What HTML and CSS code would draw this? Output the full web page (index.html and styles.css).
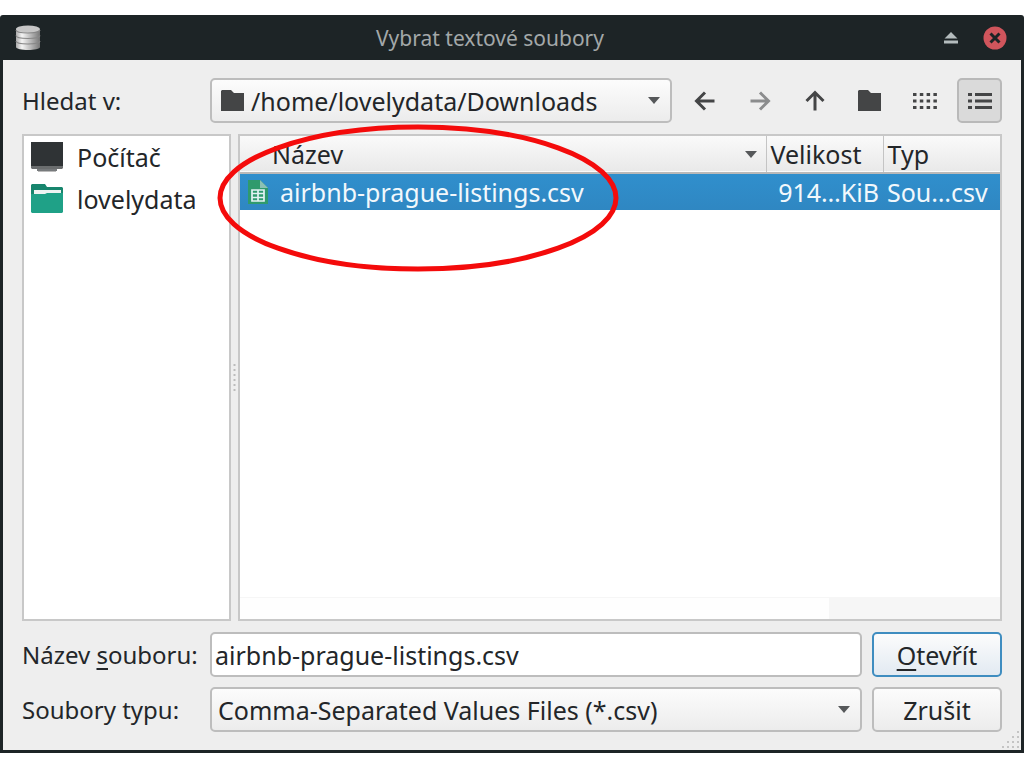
FILE: index.html
```
<!DOCTYPE html>
<html lang="cs">

<head>
    <meta charset="UTF-8">
    <meta name="viewport" content="width=device-width, initial-scale=1.0">
    <title>Vybrat textové soubory</title>
    <link rel="stylesheet" href="styles.css">
</head>

<body>
    <div class="window">
        <header class="titlebar">
            <svg class="app-icon" width="26" height="26" viewBox="0 0 26 26" aria-hidden="true">
                <defs>
                    <linearGradient id="metal">
                        <stop offset="0" stop-color="#aaa" />
                        <stop offset="0.25" stop-color="#f4f4f4" />
                        <stop offset="0.6" stop-color="#bbb" />
                        <stop offset="1" stop-color="#777" />
                    </linearGradient>
                </defs>
                <path d="M1 4v18c0 4 24 4 24 0V4z" fill="url(#metal)" />
                <ellipse cx="13" cy="4" rx="12" ry="3.500" fill="#c6c6c6" />
                <path d="M1 5c0 4 24 4 24 0M1 10.500c0 4 24 4 24 0M1 16c0 4 24 4 24 0" fill="none" stroke="#888" stroke-width="1.200" />
            </svg>
            <h1>Vybrat textové soubory</h1>
            <div class="window-buttons">
                <button type="button" aria-label="Maximalizovat">
                    <svg width="24" height="24" viewBox="0 0 24 24"><path d="M12 6l6.500 6.500h-13zM5 14.500h14v3H5z" fill="#b4bcbd" /></svg>
                </button>
                <button type="button" aria-label="Zavřít">
                    <svg width="24" height="24" viewBox="0 0 24 24"><circle cx="12" cy="12" r="11.500" fill="#d0555c" /><path d="M7.500 7.500l9 9M16.500 7.500l-9 9" stroke="#1d2426" stroke-width="3" /></svg>
                </button>
            </div>
        </header>

        <form class="content">
            <div class="toolbar">
                <label class="label" for="path">Hledat v:</label>
                <div class="combo">
                    <svg width="24" height="22" viewBox="0 0 24 22"><path d="M1 0h9l3 3h10v18H0V1z" fill="#444546" /></svg>
                    <select id="path">
                        <option>/home/lovelydata/Downloads</option>
                    </select>
                    <svg class="arrow" width="12" height="7" viewBox="0 0 12 7"><path d="M0 0h12L6 7z" fill="#56585a" /></svg>
                </div>
                <button type="button" class="tool" aria-label="Zpět">
                    <svg width="24" height="24" viewBox="0 0 24 24"><path d="M21.500 12H4M12 3.500L3.500 12l8.500 8.500" /></svg>
                </button>
                <button type="button" class="tool" aria-label="Vpřed" disabled>
                    <svg width="24" height="24" viewBox="0 0 24 24"><path d="M2.500 12H20M12 3.500l8.500 8.500-8.500 8.500" /></svg>
                </button>
                <button type="button" class="tool" aria-label="Nadřazená složka">
                    <svg width="24" height="24" viewBox="0 0 24 24"><path d="M12 21.500V4M3.500 12L12 3.500l8.500 8.500" /></svg>
                </button>
                <button type="button" class="tool" aria-label="Nová složka">
                    <svg width="24" height="24" viewBox="0 0 24 24"><path class="solid" d="M1 1h9l3 3h10v18H0V2z" /></svg>
                </button>
                <button type="button" class="tool" aria-label="Zobrazit ikony">
                    <svg width="24" height="24" viewBox="0 0 24 24"><path d="M0 5.500h24M0 12h24M0 18.500h24" stroke-dasharray="3.500 3.300" /></svg>
                </button>
                <button type="button" class="tool active" aria-label="Zobrazit podrobnosti">
                    <svg width="24" height="24" viewBox="0 0 24 24"><path d="M0 5.500h4M0 12h4M0 18.500h4M7 5.500h17M7 12h17M7 18.500h17" /></svg>
                </button>
            </div>

            <div class="panels">
                <ul class="places">
                    <li>
                        <svg width="34" height="32" viewBox="0 0 34 32"><path d="M1 1h32v26H1z" fill="#2f3335" /><path d="M1 25h32v2l-1 1H2l-1-1z" fill="#6a6d6e" /><path d="M7 28h20v2H7z" fill="#777a7c" /><path d="M8 30h18v1H8z" fill="#bbb" /></svg>
                        Počítač
                    </li>
                    <li>
                        <svg width="34" height="32" viewBox="0 0 34 32"><path d="M1 2l1-1h13l2 3h15l1 1v8H1z" fill="#17856d" /><path d="M4 7h27v4H4z" fill="#eef3f2" /><path d="M1 11l14 0 2-1h16v19l-1 1H2l-1-1z" fill="#1fa187" /></svg>
                        lovelydata
                    </li>
                </ul>
                <div class="splitter">
                    <svg width="5" height="30" viewBox="0 0 5 30"><path d="M2.500 1v28" stroke="#bbb" stroke-width="2" stroke-dasharray="2 3" /></svg>
                </div>
                <div class="files">
                    <table>
                        <thead>
                            <tr>
                                <th class="col-name">
                                    <div class="cell">
                                        Název
                                        <svg width="12" height="7" viewBox="0 0 12 7"><path d="M0 0h12L6 7z" fill="#56585a" /></svg>
                                    </div>
                                </th>
                                <th class="col-size">Velikost</th>
                                <th class="col-type">Typ</th>
                            </tr>
                        </thead>
                        <tbody>
                            <tr>
                                <td>
                                    <div class="cell">
                                        <svg width="20" height="26" viewBox="0 0 20 26"><path d="M0 1h12l8 8v16H0z" fill="#2f9a6d" /><path d="M12 1l8 8h-8z" fill="#8cc0b4" /><path d="M4 11h12v11H4zM4 14.500h12M4 18.500h12M10 11v11" fill="none" stroke="#e4f2f4" stroke-width="1.700" /></svg>
                                        airbnb-prague-listings.csv
                                    </div>
                                </td>
                                <td class="size">914…KiB</td>
                                <td>Sou…csv</td>
                            </tr>
                        </tbody>
                    </table>
                    <div class="scrollbar"><div class="thumb"></div></div>
                </div>
            </div>

            <div class="fields">
                <label class="label" for="filename">Název <u>s</u>ouboru:</label>
                <input type="text" id="filename" value="airbnb-prague-listings.csv">
                <button type="submit" class="btn primary"><u>O</u>tevřít</button>

                <label class="label" for="filetype">Soubory typu:</label>
                <div class="combo">
                    <select id="filetype">
                        <option>Comma-Separated Values Files (*.csv)</option>
                    </select>
                    <svg class="arrow" width="12" height="7" viewBox="0 0 12 7"><path d="M0 0h12L6 7z" fill="#56585a" /></svg>
                </div>
                <button type="button" class="btn">Zrušit</button>
            </div>
        </form>

        <svg class="grip" width="17" height="17" viewBox="0 0 17 17"><path d="M15 0h2v2h-2zM10 5h2v2h-2zM15 5h2v2h-2zM5 10h2v2H5zM10 10h2v2h-2zM15 10h2v2h-2zM0 15h2v2H0zM5 15h2v2H5zM10 15h2v2h-2zM15 15h2v2h-2z" fill="#c4c4c4" /></svg>

        <!-- red ring around the selected file -->
        <svg class="ring" width="404" height="150" viewBox="0 0 404 150"><ellipse cx="202" cy="75" rx="198" ry="71" fill="none" stroke="#f40b0b" stroke-width="5" /></svg>
    </div>
</body>

</html>
```
FILE: styles.css
```
* {
    box-sizing: border-box;
}

body {
    margin: 0;
    padding: 15px 0;
    min-height: 100vh;
    display: flex;
    background-color: white;
    color: #232629;
    font-family: "Noto Sans", sans-serif;
    font-size: 25px;
}

button,
input,
select {
    font: inherit;
    color: inherit;
}

svg {
    flex-shrink: 0;
}

u {
    text-decoration-thickness: 2px;
    text-underline-offset: 4px;
    text-decoration-skip-ink: none;
}

.window {
    position: relative;
    flex: 1;
    display: flex;
    flex-direction: column;
    border: 3px solid #1d2426;
    border-top: 0;
    border-radius: 3px 3px 0 0;
    background-color: #eeeeee;
}

.titlebar {
    height: 45px;
    padding: 0 14px 0 12px;
    display: flex;
    align-items: center;
    background-color: #1d2426;
    color: #a3a8a9;
}

.titlebar h1 {
    flex: 1;
    margin: 0;
    font-size: 21px;
    font-weight: normal;
    text-align: center;
}

.window-buttons {
    display: flex;
    gap: 20px;
}

.window-buttons button {
    display: flex;
    padding: 0;
    border: 0;
    background: none;
}

.content {
    flex: 1;
    display: flex;
    flex-direction: column;
    gap: 11px;
    padding: 18px 19px;
}

.toolbar {
    display: flex;
    align-items: center;
    gap: 10px;
}

.label {
    width: 178px;
    font-size: 24px;
    white-space: nowrap;
}

.combo,
.btn,
#filename {
    height: 45px;
    border: 2px solid #bdbdbd;
    border-radius: 5px;
    background: linear-gradient(#fcfcfc, #ececec);
}

.combo {
    flex: 1;
    display: flex;
    align-items: center;
    padding: 0 10px 0 6px;
}

.combo select {
    flex: 1;
    min-width: 0;
    padding: 0;
    border: 0;
    background: none;
    appearance: none;
}

.toolbar .combo {
    padding-left: 9px;
    gap: 6px;
}

.tool {
    width: 45px;
    height: 45px;
    display: flex;
    justify-content: center;
    align-items: center;
    padding: 0;
    border: 2px solid transparent;
    border-radius: 5px;
    background: none;
}

.tool.active {
    border-color: #b9b9b9;
    background-color: #dadada;
}

.tool path {
    fill: none;
    stroke: #444546;
    stroke-width: 3px;
}

.tool:disabled path {
    stroke: #8b8c8d;
}

.tool .solid {
    fill: #444546;
    stroke: none;
}

.panels {
    flex: 1;
    display: flex;
}

.places {
    width: 209px;
    margin: 0;
    padding: 0 6px;
    list-style: none;
    border: 2px solid #c8c8c8;
    background-color: white;
}

.places li {
    height: 42px;
    display: flex;
    align-items: center;
    gap: 13px;
}

.splitter {
    width: 7px;
    display: flex;
    justify-content: center;
    align-items: center;
}

.files {
    flex: 1;
    display: flex;
    flex-direction: column;
    justify-content: space-between;
    border: 2px solid #c8c8c8;
    background-color: white;
}

table {
    width: 100%;
    table-layout: fixed;
    border-collapse: collapse;
}

th,
td {
    padding: 0 4px;
    font-weight: normal;
    text-align: left;
    white-space: nowrap;
}

thead tr {
    height: 37px;
    background: linear-gradient(#fafafa, #e9e9e9);
    border-bottom: 2px solid #b9b9b9;
}

th + th {
    border-left: 1px solid #c4c4c4;
}

.col-size,
.col-type {
    width: 117px;
}

.cell {
    display: flex;
    align-items: center;
}

th .cell {
    justify-content: space-between;
    padding: 0 5px 0 28px;
}

td .cell {
    gap: 12px;
    padding-left: 4px;
}

tbody tr {
    height: 36px;
    line-height: 36px;
    background: linear-gradient(#308fcd, #2f87c2);
    color: #f2f8fc;
}

.size {
    text-align: right;
}

.scrollbar {
    height: 22px;
    background-color: #f6f6f6;
}

.thumb {
    width: 77.5%;
    height: 100%;
    background-color: #fefefe;
    border-top: 1px solid #f6f6f6;
}

.fields {
    display: grid;
    grid-template-columns: 178px 1fr 130px;
    gap: 10px;
    align-items: center;
}

#filename {
    width: 100%;
    padding: 0 3px;
    background: white;
}

.btn {
    padding: 0;
}

.btn.primary {
    border-color: #3f8dc0;
    background: linear-gradient(#fcfcfc, #e2eaf2);
}

.grip {
    position: absolute;
    right: 2px;
    bottom: 2px;
}

.ring {
    position: absolute;
    left: 213px;
    top: 108px;
    pointer-events: none;
}
```
